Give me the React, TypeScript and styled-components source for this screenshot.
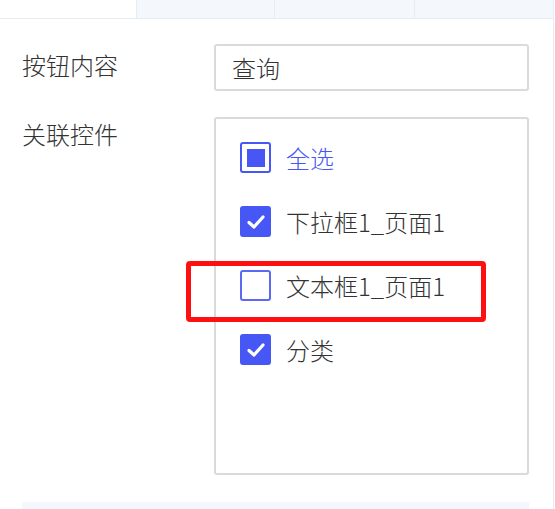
import styled, { createGlobalStyle, css } from "styled-components";

const GlobalStyle = createGlobalStyle`
  html, body {
    margin: 0;
    padding: 0;
    background: #ffffff;
  }
  body {
    font-family: "Noto Sans CJK SC", "Liberation Sans", sans-serif;
    color: #333333;
  }
`;

const BLUE = "#4657f5";

const Page = styled.div`
  width: 553px;
  height: 509px;
  border-right: 1px solid #e6edf5;
  background: #ffffff;
  overflow: hidden;
`;

const TabStrip = styled.div`
  display: grid;
  grid-template-columns: 136px 138px 140px 1fr;
  height: 18px;
  border-bottom: 1px solid #e6ecf3;
`;

const Tab = styled.div<{ $active?: boolean }>`
  background: ${(p) => (p.$active ? "#ffffff" : "#f4f8fc")};
  border-left: ${(p) => (p.$active ? "none" : "1px solid #e6ecf3")};
`;

const Form = styled.div`
  display: flex;
  flex-direction: column;
  gap: 26px;
  padding: 25px 24px 0 22px;
`;

const Row = styled.div`
  display: flex;
  align-items: flex-start;
`;

const Label = styled.div<{ $top: number }>`
  width: 192px;
  flex-shrink: 0;
  padding-top: ${(p) => p.$top}px;
  font-size: 24px;
  font-weight: 300;
  line-height: 26px;
  color: #333333;
`;

const Input = styled.div`
  box-sizing: border-box;
  width: 315px;
  height: 47px;
  border: 2px solid #dadada;
  border-radius: 3px;
  padding: 0 16px;
  display: flex;
  align-items: center;
  font-size: 24px;
  font-weight: 300;
  color: #333333;
`;

const ListBox = styled.div`
  position: relative;
  box-sizing: border-box;
  width: 315px;
  height: 358px;
  border: 2px solid #dadada;
  border-radius: 3px;
  padding: 23px 24px;
  display: flex;
  flex-direction: column;
  gap: 33px;
`;

const Option = styled.div<{ $highlight?: boolean }>`
  display: flex;
  align-items: center;
  gap: 15px;
  height: 31px;
  font-size: 24px;
  font-weight: 300;
  color: ${(p) => (p.$highlight ? BLUE : "#333333")};
`;

type BoxState = "checked" | "partial" | "empty";

const Box = styled.span<{ $state: BoxState }>`
  box-sizing: border-box;
  width: 31px;
  height: 31px;
  border-radius: 3px;
  flex-shrink: 0;
  display: flex;
  align-items: center;
  justify-content: center;
  ${(p) =>
    p.$state === "checked"
      ? css`
          background: ${BLUE};
        `
      : css`
          background: #ffffff;
          border: 2px solid ${p.$state === "partial" ? BLUE : "#5c69f3"};
        `}
`;

const PartialMark = styled.span`
  width: 18px;
  height: 18px;
  background: ${BLUE};
`;

const Callout = styled.div`
  position: absolute;
  left: -30px;
  top: 142px;
  width: 300px;
  height: 61px;
  box-sizing: border-box;
  border: 5px solid #ff1010;
  border-radius: 4px;
  pointer-events: none;
`;

const BottomBar = styled.div`
  margin: 27px 24px 0 22px;
  height: 12px;
  background: #f4f8fc;
`;

function Check({ state }: { state: BoxState }) {
  if (state === "partial") {
    return (
      <Box $state={state}>
        <PartialMark />
      </Box>
    );
  }
  return (
    <Box $state={state}>
      {state === "checked" && (
        <svg width="20" height="16" viewBox="0 0 20 16">
          <path d="M3 8.5l5 4.5 9-10" fill="none" stroke="#fff" strokeWidth="3.2" strokeLinecap="round" strokeLinejoin="round" />
        </svg>
      )}
    </Box>
  );
}

const options: { text: string; state: BoxState }[] = [
  { text: "全选", state: "partial" },
  { text: "下拉框1_页面1", state: "checked" },
  { text: "文本框1_页面1", state: "empty" },
  { text: "分类", state: "checked" },
];

export default function App() {
  return (
    <>
      <GlobalStyle />
      <Page>
        <TabStrip>
          <Tab $active />
          <Tab />
          <Tab />
          <Tab />
        </TabStrip>
        <Form>
          <Row>
            <Label $top={8}>按钮内容</Label>
            <Input>查询</Input>
          </Row>
          <Row>
            <Label $top={4}>关联控件</Label>
            <ListBox>
              {options.map((o) => (
                <Option key={o.text} $highlight={o.state === "partial"}>
                  <Check state={o.state} />
                  {o.text}
                </Option>
              ))}
              <Callout />
            </ListBox>
          </Row>
        </Form>
        <BottomBar />
      </Page>
    </>
  );
}
